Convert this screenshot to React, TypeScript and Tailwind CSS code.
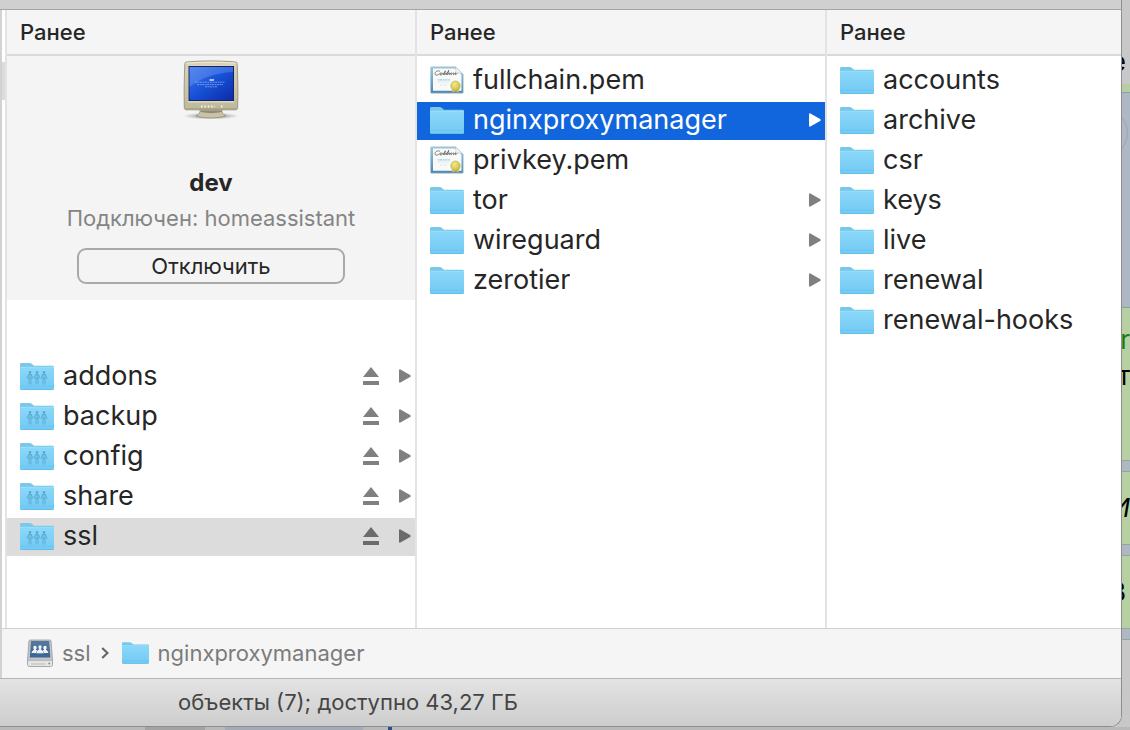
import type { ReactNode } from 'react';
import clsx from 'clsx';

// ── Icons ─────────────────────────────────────────────────────────

function FolderIcon({ shared = false, className = 'h-[27px] w-[34px]' }: { shared?: boolean; className?: string }) {
  return (
    <svg viewBox="0 0 34 27" className={clsx('shrink-0', className)} aria-hidden="true">
      <defs>
        <linearGradient id="folder-front" x1="0" y1="0" x2="0" y2="1">
          <stop offset="0" stopColor="#8bd7fa" />
          <stop offset="1" stopColor="#72caf5" />
        </linearGradient>
      </defs>
      <path d="M0 1.6C0 .7.6 0 1.500 0h8.300c.8 0 1.300.2 1.900.7l1.700 1.500c.4.4.8.5 1.500.5h17.600c.9 0 1.500.6 1.500 1.500V10H0z" fill="#79c8ea" />
      <path d="M0 4.300h34v21.200c0 .9-.6 1.500-1.500 1.500h-31C.6 27 0 26.400 0 25.500z" fill="url(#folder-front)" />
      <path d="M0 4.300h34" stroke="#9be0fd" strokeWidth="1" />
      <path d="M0 23.200h34" stroke="#62bce9" strokeWidth=".6" />
      <path d="M.4 25.900c.3.500.6.700 1.200.700h30.800c.6 0 1-.2 1.200-.7" stroke="#5bb6e3" strokeWidth=".8" fill="none" />
      {shared && (
        <g stroke="#57a9d0" fill="none" strokeWidth=".9" strokeLinecap="round">
          {[10, 17, 24].map((x) => (
            <g key={x} transform={`translate(${x} 8)`}>
              <circle cx="0" cy="1.400" r="1.300" fill="#57a9d0" stroke="none" />
              <path d="M-1.300 3.600h2.600M-1.300 3.600l-1.700 3.600M1.300 3.600l1.700 3.600M-1 3.800v9.200M1 3.800v9.200M-1 7.500h2" />
            </g>
          ))}
        </g>
      )}
    </svg>
  );
}

function CertificateIcon() {
  return (
    <svg viewBox="0 0 34 28" className="h-7 w-[34px] shrink-0" aria-hidden="true">
      <defs>
        <linearGradient id="cert-border" x1="0" y1="0" x2="0" y2="1">
          <stop offset="0" stopColor="#9bcbd8" />
          <stop offset=".5" stopColor="#6ba6cb" />
          <stop offset="1" stopColor="#4e86b4" />
        </linearGradient>
        <radialGradient id="cert-seal" cx=".4" cy=".35" r=".7">
          <stop offset="0" stopColor="#f1ea8e" />
          <stop offset="1" stopColor="#c9b93c" />
        </radialGradient>
      </defs>
      <path d="M1.500.8h24l7.700 7.400v18c0 .6-.4 1-1 1H1.500c-.5 0-.9-.4-.9-.9V1.700c0-.5.4-.9.900-.9z" fill="url(#cert-border)" stroke="#a9c3cf" strokeWidth=".6" />
      <path d="M3 2.500h22l6.500 6.500v15.800H3z" fill="#f9faf8" />
      <path d="M25.500.8c.7 2.300.5 4.500-.5 6.300 2.800-.5 6 .1 8.200 1.100z" fill="#eef3f2" stroke="#b8c8ca" strokeWidth=".6" />
      <path
        d="M10 5.500C8 4 5.200 5.400 5 7.600c-.1 2 2.500 2 4.500.2M10 8.200c1.300-.2 1.800-1.500 1-1.500-1.200.1-1.600 2.300-.2 2.300 1 0 1.500-1 2.200-2.100l.2 1.900 2.200-4-1 3.800c.8.300 1.300-.7 1.900-1.700l-.1 1.900 2.600-4.500-1.300 4.500 1.900-2 .1 1.900 2.100-1.900c-1.100.1-1.200 1.900-.1 1.900l1.900-1.900.1 1.900 2-1.800-.1 1.700 2-1.200"
        fill="none"
        stroke="#50514e"
        strokeWidth=".7"
      />
      <path d="M7.500 13.800h13" stroke="#9ccbe6" strokeWidth="1.300" strokeDasharray="2 .5" />
      <path d="M8 16h12M10 19h7" stroke="#cadfea" strokeWidth=".8" strokeDasharray="2 .7" />
      <path d="M22.500 22l-.3 4.800 3.300-1.200 3.400 1.200-.6-5z" fill="#c4b452" />
      <circle cx="25.500" cy="19.800" r="4.800" fill="url(#cert-seal)" stroke="#bcae4a" strokeWidth=".6" />
    </svg>
  );
}

function MonitorIcon() {
  return (
    <svg viewBox="0 0 60 60" className="h-[60px] w-[60px]" aria-hidden="true">
      <defs>
        <linearGradient id="crt-case" x1="0" y1="0" x2="0" y2="1">
          <stop offset="0" stopColor="#d9d5bd" />
          <stop offset="1" stopColor="#bfb99b" />
        </linearGradient>
        <linearGradient id="crt-screen" x1="0" y1="0" x2="1" y2="1">
          <stop offset="0" stopColor="#3f78ea" />
          <stop offset=".5" stopColor="#1650d6" />
          <stop offset="1" stopColor="#0d2ba8" />
        </linearGradient>
        <radialGradient id="crt-shadow">
          <stop offset="0" stopColor="#000" stopOpacity=".5" />
          <stop offset="1" stopColor="#000" stopOpacity="0" />
        </radialGradient>
      </defs>
      <ellipse cx="30" cy="56" rx="28" ry="3.500" fill="url(#crt-shadow)" />
      <path d="M19 49h22c-.5 4 1 5 4 7-8 2.500-23 2.500-30 0 3-2 4.500-3 4-7z" fill="#c8c3a8" stroke="#8e8970" strokeWidth=".7" />
      <path d="M19.500 50.500h21.500v1.500c-7 1.500-14.500 1.500-21.500 0z" fill="#8f8a73" />
      <path d="M5.500 2C20 .6 40 .6 54.500 2c1 0 1.500.5 1.600 1.500.8 14 .9 30 .6 44 0 1.500-.7 2.300-2 2.300H5.300c-1.300 0-2-.8-2-2.300-.3-14-.2-30 .6-44C4 2.500 4.500 2 5.500 2z" fill="url(#crt-case)" stroke="#969179" strokeWidth=".9" />
      <path d="M5.500 3.200C20 1.800 40 1.800 54.500 3.200" stroke="#f0edda" strokeWidth="1" fill="none" />
      <path d="M7 5h46v37.500H7z" fill="#ddd8c1" />
      <path d="M7.500 6H53v35H7.500z" fill="#17235c" />
      <path d="M8.500 7H52v33H8.500z" fill="url(#crt-screen)" />
      <path d="M8.500 7H52v5C34 13 20 18 8.500 27z" fill="#7fa6f5" opacity=".35" />
      <path d="M28.500 20h4.500" stroke="#dce6ff" strokeWidth="1.500" />
      <path d="M14 22.200h30M16 24.600h26M24 26.800h12" stroke="#a9c1f8" strokeWidth=".6" strokeDasharray="2 .5" />
      <path d="M20 46.500h14M40 46.500h2" stroke="#f7f5e8" strokeWidth="1.800" strokeDasharray="1.400 2" />
      <path d="M4 48.500h52" stroke="#a19b80" strokeWidth=".6" />
    </svg>
  );
}

function DriveIcon() {
  return (
    <svg viewBox="0 0 26 28" className="h-7 w-[26px] shrink-0" aria-hidden="true">
      <defs>
        <linearGradient id="drive-top" x1="0" y1="0" x2="0" y2="1">
          <stop offset="0" stopColor="#57799f" />
          <stop offset="1" stopColor="#3a6597" />
        </linearGradient>
      </defs>
      <path d="M3.500 1h19c1 0 1.500.5 1.600 1.500L25.500 21v4.500c0 1.300-.7 2-2 2h-21c-1.300 0-2-.7-2-2V21L1.900 2.500C2 1.500 2.500 1 3.500 1z" fill="#c3c5c6" stroke="#8e9194" strokeWidth=".7" />
      <path d="M4 2h18.200l1.100 16.500H2.800z" fill="url(#drive-top)" />
      <path d="M1 21.500h24v4c0 .9-.5 1.500-1.500 1.500h-21c-1 0-1.500-.6-1.500-1.500z" fill="#e4e5e5" />
      <path d="M1 21.300h24" stroke="#9da0a1" strokeWidth=".6" />
      <path d="M4 25h14" stroke="#b8baba" strokeWidth="1" />
      <circle cx="22.200" cy="24.500" r="1" fill="#8d9a8b" />
      <g fill="#f4f7fa">
        {[8, 18].map((x) => (
          <path key={x} d={`M${x} 6.800a1.700 1.700 0 011.700 1.700c0 1-.4 1.500-.9 2 .2.700 2.200.8 2.600 3.500h-6.800c.4-2.700 2.400-2.800 2.600-3.500-.5-.5-.9-1-.9-2A1.700 1.700 0 01${x} 6.800z`} />
        ))}
        <path d="M13 5.900a1.900 1.900 0 011.900 1.900c0 1.200-.5 1.700-1 2.300.2.900 2.600 1 3 4.300H9.100c.4-3.300 2.800-3.400 3-4.300-.5-.6-1-1.100-1-2.300A1.900 1.900 0 0113 5.900z" stroke="#476e9b" strokeWidth=".5" />
      </g>
    </svg>
  );
}

function EjectIcon() {
  return (
    <svg viewBox="0 0 16 18" className="h-[18px] w-4" fill="currentColor" aria-hidden="true">
      <path d="M8 0l8 10H0zM0 14h16v4H0z" />
    </svg>
  );
}

function ExpandIcon() {
  return (
    <svg viewBox="0 0 13 14" className="h-3.5 w-[13px] shrink-0" fill="currentColor" aria-hidden="true">
      <path d="M1 1.200C1 .4 1.700.1 2.400.4l9.700 5.500c.8.5.8 1.600 0 2.100l-9.700 5.600c-.7.3-1.400 0-1.400-.8z" />
    </svg>
  );
}

// ── Data ──────────────────────────────────────────────────────────

interface Entry {
  name: string;
  kind: 'folder' | 'shared' | 'certificate';
  expandable?: boolean;
  state?: 'active' | 'path';
}

const SHARES: Entry[] = [
  { name: 'addons', kind: 'shared', expandable: true },
  { name: 'backup', kind: 'shared', expandable: true },
  { name: 'config', kind: 'shared', expandable: true },
  { name: 'share', kind: 'shared', expandable: true },
  { name: 'ssl', kind: 'shared', expandable: true, state: 'path' },
];

const SSL_ENTRIES: Entry[] = [
  { name: 'fullchain.pem', kind: 'certificate' },
  { name: 'nginxproxymanager', kind: 'folder', expandable: true, state: 'active' },
  { name: 'privkey.pem', kind: 'certificate' },
  { name: 'tor', kind: 'folder', expandable: true },
  { name: 'wireguard', kind: 'folder', expandable: true },
  { name: 'zerotier', kind: 'folder', expandable: true },
];

const PROXY_ENTRIES: Entry[] = [
  { name: 'accounts', kind: 'folder' },
  { name: 'archive', kind: 'folder' },
  { name: 'csr', kind: 'folder' },
  { name: 'keys', kind: 'folder' },
  { name: 'live', kind: 'folder' },
  { name: 'renewal', kind: 'folder' },
  { name: 'renewal-hooks', kind: 'folder' },
];

// ── Columns ───────────────────────────────────────────────────────

function EntryRow({ entry }: { entry: Entry }) {
  const { name, kind, expandable, state } = entry;
  return (
    <li
      className={clsx(
        'flex h-[38px] items-center pr-1 pb-0.5 pl-[13px]',
        state === 'active' && 'bg-[#1166de] text-white',
        state === 'path' && 'bg-[#dcdcdc] text-[#262626]',
        !state && 'text-[#262626]'
      )}
    >
      <button type="button" className="flex min-w-0 flex-1 items-center gap-[9px] text-left">
        {kind === 'certificate' ? <CertificateIcon /> : <FolderIcon shared={kind === 'shared'} />}
        <span className="truncate">{name}</span>
      </button>
      {kind === 'shared' && (
        <button
          type="button"
          aria-label={`Извлечь ${name}`}
          className={clsx('mr-[19px]', state ? 'text-[#6b6b6b]' : 'text-[#808080]')}
        >
          <EjectIcon />
        </button>
      )}
      {expandable && (
        <span className={clsx(state === 'active' ? 'text-white' : state ? 'text-[#6b6b6b]' : 'text-[#808080]')}>
          <ExpandIcon />
        </span>
      )}
    </li>
  );
}

function EntryList({ entries, className }: { entries: Entry[]; className?: string }) {
  return (
    <ul className={clsx('flex flex-col gap-0.5 text-[27px] leading-9', className)}>
      {entries.map((entry) => (
        <EntryRow key={entry.name} entry={entry} />
      ))}
    </ul>
  );
}

function Column({ last = false, children }: { last?: boolean; children: ReactNode }) {
  return (
    <section className={clsx('flex min-w-0 flex-col', !last && 'border-r-2 border-[#e3e3e3]')}>
      <h2 className="h-[46px] shrink-0 border-b-2 border-[#dadada] bg-[#f5f5f5] pl-[13px] text-[22px] leading-[44px] font-medium text-[#262626]">
        Ранее
      </h2>
      {children}
    </section>
  );
}

function ServerPanel() {
  return (
    <div className="flex h-[244px] flex-col items-center bg-[#f4f4f4] pt-1">
      <MonitorIcon />
      <p className="mt-[47px] text-2xl leading-8 font-bold text-[#262626]">dev</p>
      <p className="mt-[3px] text-[22px] leading-8 text-[#858585]">Подключен: homeassistant</p>
      <button
        type="button"
        className="mt-3.5 h-9 w-[268px] rounded-[9px] border-2 border-[#a9a9a9] text-[22px] leading-8 text-[#262626]"
      >
        Отключить
      </button>
    </div>
  );
}

// ── Page behind the window ────────────────────────────────────────

function PageEdge() {
  return (
    <div className="flex w-2 shrink-0 flex-col overflow-hidden text-[26px] leading-8 text-black" aria-hidden="true">
      <div className="flex h-[84px] items-end justify-end pr-1 pb-1.5">е</div>
      <div className="h-[9px] border-b border-[#8ba0a5] bg-[#b8cda4]" />
      <div className="flex h-[215px] items-start justify-end overflow-hidden border-b border-[#8aa58f] bg-[#aeb7c4] pt-4">
        <div className="mr-0.5 size-12 shrink-0 rounded-full border border-[#9ba5b3]" />
      </div>
      <div className="flex h-[152px] flex-col items-end bg-[#b7d0a2] pt-4">
        <span className="text-[#137d13]">r</span>
        <span className="mt-1">т</span>
      </div>
      <div className="h-3 border-y border-[#93a79f] bg-[#aeb7c4]" />
      <div className="flex h-[72px] items-center justify-end bg-[#b7d0a2] italic">И</div>
      <div className="h-3 border-y border-[#93a79f] bg-[#aeb7c4]" />
      <div className="flex h-[72px] items-center justify-end bg-[#b7d0a2] pr-1">В</div>
      <div className="h-3 border-y border-[#93a79f] bg-[#aeb7c4]" />
    </div>
  );
}

export default function App() {
  return (
    <div className="flex h-screen flex-col overflow-hidden bg-[#c8c8c8] font-['Inter','Noto_Sans',sans-serif]">
      <div className="flex min-h-0 flex-1">
        <main className="flex min-w-0 flex-1 flex-col overflow-hidden rounded-br-xl border-r border-b border-[#8e8e8e] bg-white">
          <div className="h-2.5 shrink-0 border-b border-[#a5a5a5] bg-[#d0d0d0]" />

          <div className="flex min-h-0 flex-1 border-l-2 border-[#d2d2d2]">
            <div className="w-[5px] shrink-0 border-r-2 border-[#e3e3e3] pt-[52px]">
              <div className="h-[38px] bg-[#dcdcdc]" />
            </div>
            <div className="grid min-w-0 flex-1 grid-cols-[410fr_410fr_294fr]">
              <Column>
                <ServerPanel />
                <EntryList entries={SHARES} className="pt-[58px]" />
              </Column>
              <Column>
                <EntryList entries={SSL_ENTRIES} className="pt-1.5" />
              </Column>
              <Column last>
                <EntryList entries={PROXY_ENTRIES} className="pt-1.5" />
              </Column>
            </div>
          </div>

          <nav className="flex h-[50px] shrink-0 items-center border-t border-l-2 border-t-[#cfcfcf] border-l-[#d2d2d2] bg-[#f5f5f5] pb-0.5 pl-[25px] text-[22px] leading-8 text-[#7b7b7b]">
            <button type="button" className="flex items-center gap-[9px]">
              <DriveIcon />
              ssl
            </button>
            <svg viewBox="0 0 8 12" className="mr-[13px] ml-2.5 h-3 w-2" fill="none" stroke="#666" strokeWidth="2.200" aria-hidden="true">
              <path d="M1.200 1l5.300 5-5.300 5" />
            </svg>
            <button type="button" className="flex items-center gap-[9px]">
              <FolderIcon className="h-[22px] w-[27px]" />
              nginxproxymanager
            </button>
          </nav>

          <footer className="h-12 shrink-0 border-t border-[#b3b3b3] bg-linear-to-b from-[#e3e3e3] to-[#cdcdcd] pl-[178px] text-[22px] leading-[47px] text-[#454545]">
            объекты (7); доступно 43,27 ГБ
          </footer>
        </main>
        <PageEdge />
      </div>
      <div className="flex h-[3px] shrink-0 bg-[#b9b9b9]" aria-hidden="true">
        <div className="ml-[145px] w-[60px] bg-[#a3a3a3]" />
        <div className="ml-5 w-[138px] bg-[#a3abb8]" />
        <div className="ml-[25px] w-1 bg-[#274f8f]" />
      </div>
    </div>
  );
}
